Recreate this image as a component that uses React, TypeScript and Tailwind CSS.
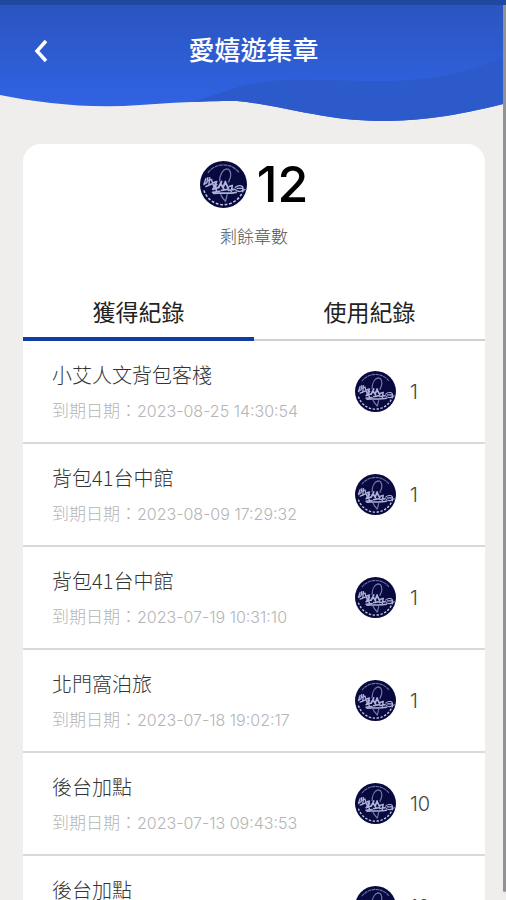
import React from 'react';

interface StampRecord {
  id: number;
  title: string;
  expiresAt: string;
  count: number;
}

const records: StampRecord[] = [
  { id: 1, title: '小艾人文背包客棧', expiresAt: '2023-08-25 14:30:54', count: 1 },
  { id: 2, title: '背包41台中館', expiresAt: '2023-08-09 17:29:32', count: 1 },
  { id: 3, title: '背包41台中館', expiresAt: '2023-07-19 10:31:10', count: 1 },
  { id: 4, title: '北門窩泊旅', expiresAt: '2023-07-18 19:02:17', count: 1 },
  { id: 5, title: '後台加點', expiresAt: '2023-07-13 09:43:53', count: 10 },
  { id: 6, title: '後台加點', expiresAt: '2023-07-13 09:41:26', count: 10 },
];

const StampIcon: React.FC<{ className: string }> = ({ className }) => (
  <svg viewBox="0 0 48 48" className={className} fill="none" aria-hidden="true">
    <circle cx="24" cy="24" r="24" fill="#08093f" />
    <path d="M8 12A20 20 0 0 1 40 12" stroke="#6c70a0" strokeWidth="1.3" strokeDasharray="4 .6" />
    <path d="M4 30A21 21 0 0 0 44 30" stroke="#c3c5df" strokeWidth="1.600" strokeDasharray="2.800 1.800" />
    {/* island outline */}
    <path
      d="M20 21C20 14 23 9 27 8C31 8 32 13 31 17L29 22M21 34C22 37 24 39 26 41C27 39 27 36 28 34"
      stroke="#7478a8"
      strokeWidth="1.400"
    />
    {/* brush lettering */}
    <g stroke="#aeb2d8" strokeWidth="1.500" strokeLinecap="round" strokeLinejoin="round">
      <path d="M6 18L4 24M8 17L7 22L4 24M8 20L12 19M10 17L9 25M6 26L13 23M12 20L14 26" />
      <path d="M14 22L17 21L15 25M17 24L13 29L19 27M16 26L17 32M13 32L20 31" strokeWidth="1.800" />
      <path d="M22 21L19 27M21 23L24 28M26 21L24 26M26 22L29 28M22 30L28 29" strokeWidth="2" />
      <path d="M30 26L33 25L32 31M29 30L35 29" strokeWidth="1.700" />
      <path d="M36 27C39 24 44 25 44 28C44 32 38 32 36 29M38 28L43 28M44 30L46 29" strokeWidth="1.300" />
      <path d="M14 33C20 32 28 34 37 32" strokeWidth="1.700" />
    </g>
  </svg>
);

const Header: React.FC = () => (
  <header className="relative h-[124px]">
    <svg
      viewBox="0 0 503 124"
      preserveAspectRatio="none"
      className="absolute inset-0 h-full w-full"
      aria-hidden="true"
    >
      <defs>
        <linearGradient id="sky" x1="0" y1="0" x2="0" y2="1">
          <stop offset="0.05" stopColor="#2b55c0" />
          <stop offset="0.85" stopColor="#3062e2" />
        </linearGradient>
      </defs>
      <path
        d="M0 0H503V104C455 116 420 121 380 121C325 121 280 105 237 101C200 101 170 103 140 105C90 109 40 103 0 95Z"
        fill="url(#sky)"
      />
      <path
        d="M503 58C450 78 420 82 360 81C310 80 270 77 238 87C224 92 208 97 192 102C210 101 225 101 237 101C280 105 325 121 380 121C420 121 455 116 503 104Z"
        fill="#2d5acb"
      />
    </svg>
    <div className="relative">
      <div className="h-[5px] bg-[#2148a0]" />
      <div className="grid h-[88px] grid-cols-[82px_1fr_78px] items-center">
        <button type="button" aria-label="返回" className="flex h-full items-center justify-center pt-1">
          <svg viewBox="0 0 16 24" className="h-6 w-4" fill="none" aria-hidden="true">
            <path d="M13 2L4 12L13 22" stroke="#fff" strokeWidth="3.500" />
          </svg>
        </button>
        <h1 className="text-center text-[26px] leading-8 font-medium text-white">愛嬉遊集章</h1>
      </div>
    </div>
  </header>
);

const RecordRow: React.FC<{ record: StampRecord }> = ({ record }) => (
  <li className="flex h-[103px] items-center border-b-2 border-[#d9d9db] pl-[29px]">
    <div className="flex-1">
      <div className="text-[20px] leading-[30px] font-light text-[#333]">{record.title}</div>
      <div className="mt-2 text-[17px] leading-6 font-light whitespace-nowrap text-[#b5b5b5]">
        到期日期：<span className="font-[Inter] text-[16px]">{record.expiresAt}</span>
      </div>
    </div>
    <div className="flex w-[130px] items-center gap-3.5">
      <StampIcon className="h-[41px] w-[41px]" />
      <span className="font-[Inter] text-[20px] leading-6 font-light text-[#444]">{record.count}</span>
    </div>
  </li>
);

export default function App() {
  return (
    <div className="flex h-screen overflow-hidden bg-[#efeeec] font-['Noto_Sans_CJK_TC',sans-serif]">
      <div className="min-w-0 flex-1">
        <Header />
        <main className="mt-5 mr-[18px] ml-[23px] rounded-t-[18px] bg-white">
          <section className="flex h-[138px] flex-col items-center pt-3">
            <div className="flex h-14 items-center gap-2.5">
              <StampIcon className="h-[47px] w-[47px]" />
              <span className="font-[Inter] text-[50px] leading-[56px] font-medium text-black">12</span>
            </div>
            <p className="mt-3 text-[17px] leading-6 font-light text-[#555]">剩餘章數</p>
          </section>
          <div role="tablist" className="grid h-[59px] grid-cols-2 text-[23px] leading-8 text-[#222]">
            <button
              type="button"
              role="tab"
              aria-selected="true"
              className="border-b-4 border-[#0f3da8] pt-0.5"
            >
              獲得紀錄
            </button>
            <button
              type="button"
              role="tab"
              aria-selected="false"
              className="border-b-2 border-[#d0d0d2]"
            >
              使用紀錄
            </button>
          </div>
          <ul>
            {records.map((record) => (
              <RecordRow key={record.id} record={record} />
            ))}
          </ul>
        </main>
      </div>
      {/* scroll track */}
      <div className="flex w-[3px] flex-col">
        <div className="h-[5px] bg-[#2148a0]" />
        <div className="mb-2 flex-1 rounded-b-sm bg-[#929294]" />
      </div>
    </div>
  );
}
